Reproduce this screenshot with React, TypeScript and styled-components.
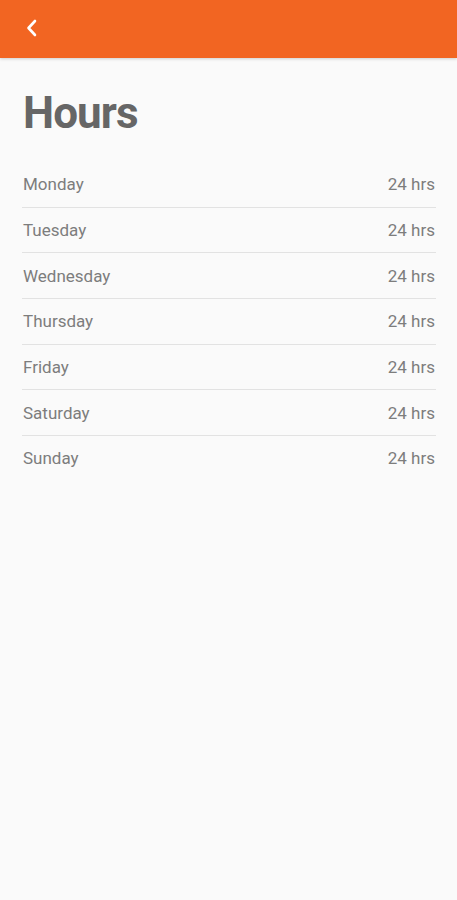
import React from 'react';
import styled, { createGlobalStyle } from 'styled-components';

const hours = [
  { day: 'Monday', value: '24 hrs' },
  { day: 'Tuesday', value: '24 hrs' },
  { day: 'Wednesday', value: '24 hrs' },
  { day: 'Thursday', value: '24 hrs' },
  { day: 'Friday', value: '24 hrs' },
  { day: 'Saturday', value: '24 hrs' },
  { day: 'Sunday', value: '24 hrs' },
];

const App: React.FC = () => {
  return (
    <Page>
      <GlobalStyle />
      <TopBar>
        <BackButton aria-label="Back">
          <svg width="14" height="20" viewBox="0 0 14 20" fill="none">
            <path
              d="M10 3 L3.5 10 L10 17"
              stroke="#fff"
              strokeWidth="2.6"
              strokeLinecap="round"
              strokeLinejoin="round"
            />
          </svg>
        </BackButton>
      </TopBar>
      <Content>
        <Title>Hours</Title>
        <HoursList>
          {hours.map((h) => (
            <HoursRow key={h.day}>
              <Day>{h.day}</Day>
              <Value>{h.value}</Value>
            </HoursRow>
          ))}
        </HoursList>
      </Content>
    </Page>
  );
};

const GlobalStyle = createGlobalStyle`
  html, body {
    margin: 0;
    padding: 0;
    background: #fafafa;
  }
  body {
    font-family: Roboto, "Noto Sans", Arial, sans-serif;
  }
`;

const Page = styled.div`
  min-height: 900px;
  background: #fafafa;
`;

const TopBar = styled.header`
  height: 58px;
  background: #f26522;
  display: flex;
  align-items: center;
  padding: 0 0 0 22px;
  box-shadow: 0 1px 3px rgba(0, 0, 0, 0.18);
`;

const BackButton = styled.button`
  display: flex;
  align-items: center;
  justify-content: center;
  width: 20px;
  height: 24px;
  padding: 0;
  margin-top: -2px;
  background: none;
  border: none;
  cursor: pointer;
`;

const Content = styled.main`
  padding: 29px 21px 0 22px;
`;

const Title = styled.h1`
  margin: 0 0 0 1px;
  font-size: 44px;
  line-height: 52px;
  font-weight: 700;
  letter-spacing: -0.9px;
  color: #666666;
`;

const HoursList = styled.ul`
  list-style: none;
  margin: 23px 0 0 0;
  padding: 0;
`;

const HoursRow = styled.li`
  display: flex;
  justify-content: space-between;
  align-items: center;
  height: 44.67px;
  padding: 0 1px;
  border-bottom: 1px solid #e2e2e2;

  &:last-child {
    border-bottom: none;
  }
`;

const Day = styled.span`
  font-size: 17px;
  color: #7d7d7d;
`;

const Value = styled.span`
  font-size: 17px;
  color: #7d7d7d;
`;

export default App;
